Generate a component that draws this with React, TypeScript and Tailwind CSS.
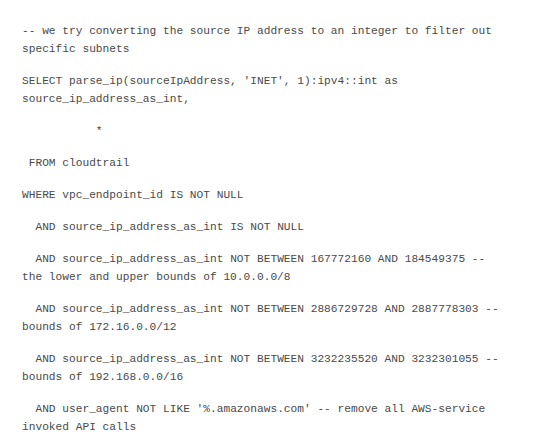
const lines: string[] = [
  "-- we try converting the source IP address to an integer to filter out specific subnets",
  "SELECT parse_ip(sourceIpAddress, 'INET', 1):ipv4::int as source_ip_address_as_int,",
  "           *",
  " FROM cloudtrail",
  "WHERE vpc_endpoint_id IS NOT NULL",
  "  AND source_ip_address_as_int IS NOT NULL",
  "  AND source_ip_address_as_int NOT BETWEEN 167772160 AND 184549375 -- the lower and upper bounds of 10.0.0.0/8",
  "  AND source_ip_address_as_int NOT BETWEEN 2886729728 AND 2887778303 -- bounds of 172.16.0.0/12",
  "  AND source_ip_address_as_int NOT BETWEEN 3232235520 AND 3232301055 -- bounds of 192.168.0.0/16",
  "  AND user_agent NOT LIKE '%.amazonaws.com' -- remove all AWS-service invoked API calls",
];

export default function App() {
  return (
    <div className="min-h-[447px] w-[536px] bg-white pl-[22px] pt-[22px] font-['Liberation_Mono','Courier_New',monospace] text-[11.2px] leading-[18px] text-[#4a4a4a]">
      <div className="flex w-[484px] flex-col gap-[14px]">
        {lines.map((line, i) => (
          <p key={i} className="whitespace-pre-wrap">
            {line}
          </p>
        ))}
      </div>
    </div>
  );
}
